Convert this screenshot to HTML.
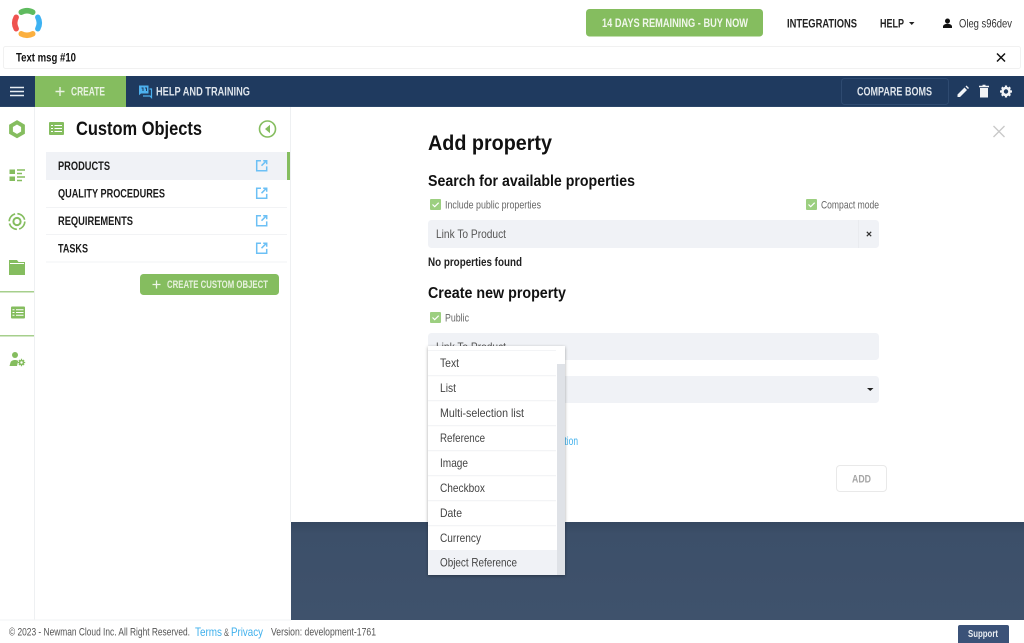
<!DOCTYPE html>
<html lang="en">
<head>
<meta charset="utf-8">
<title>Add property</title>
<style>
html,body{margin:0;padding:0;width:1024px;height:643px;overflow:hidden;background:#fff}
svg{display:block}
text{font-family:"Liberation Sans",sans-serif;font-size:12px;fill:#333}
.b{font-weight:700}
.h{font-weight:700;fill:#111}
.w{fill:#fff;font-weight:700}
.g{fill:#666}
.item{fill:#444;font-size:12px}
.link{fill:#3fb0ec}
.ic{fill:none;stroke:#85bd5f;stroke-width:2}
.ext{fill:none;stroke:#6cc0f5;stroke-width:1.5}
</style>
</head>
<body>
<svg width="1024" height="643" viewBox="0 0 1024 643" xmlns="http://www.w3.org/2000/svg">
<defs>
<linearGradient id="dk" x1="0" y1="0" x2="0" y2="1"><stop offset="0" stop-color="#354760"/><stop offset=".12" stop-color="#3c4f69"/><stop offset="1" stop-color="#3f526c"/></linearGradient>
<filter id="sh" x="-10%" y="-10%" width="120%" height="120%"><feDropShadow dx="0" dy="1" stdDeviation="1.500" flood-color="#000" flood-opacity=".35"/></filter>
</defs>
<rect width="1024" height="643" fill="#fff"/>

<!-- logo -->
<g fill="none" stroke-width="5.500" stroke-linecap="round">
<path d="M21.250 12.200A12.250 12.250 0 0 1 32.750 12.200" stroke="#5fbb5f"/>
<path d="M37.800 17.250A12.250 12.250 0 0 1 37.800 28.750" stroke="#3db2f2"/>
<path d="M32.750 33.800A12.250 12.250 0 0 1 21.250 33.800" stroke="#fbb040"/>
<path d="M16.200 28.750A12.250 12.250 0 0 1 16.200 17.250" stroke="#ef5350"/>
</g>

<!-- top bar -->
<rect x="586" y="9" width="177" height="27.500" rx="3.500" fill="#85bd5f"/>
<text x="602" y="27" class="w" textLength="146" lengthAdjust="spacingAndGlyphs" style="fill:#f1f7ec">14 DAYS REMAINING - BUY NOW</text>
<text x="787" y="27.500" class="b" textLength="70" lengthAdjust="spacingAndGlyphs" style="fill:#222">INTEGRATIONS</text>
<text x="880" y="27.500" class="b" textLength="24" lengthAdjust="spacingAndGlyphs" style="fill:#222">HELP</text>
<path d="M909 22h5.500l-2.750 3z" fill="#222"/>
<circle cx="947.500" cy="21" r="2.500" fill="#111"/>
<path d="M943 28v-1.500c0-2 3-2.800 4.500-2.800s4.500.8 4.500 2.800V28z" fill="#111"/>
<text x="959" y="27.500" textLength="53" lengthAdjust="spacingAndGlyphs" style="fill:#333">Oleg s96dev</text>

<rect x="3.500" y="46.500" width="1017" height="22" rx="2" fill="#fff" stroke="#f1f1f1"/>
<text x="16" y="61.500" class="b" textLength="60" lengthAdjust="spacingAndGlyphs" style="fill:#111">Text msg #10</text>
<path d="M997 53.500l8 8M1005 53.500l-8 8" stroke="#111" stroke-width="1.500" fill="none"/>

<!-- nav -->
<rect x="0" y="76" width="1024" height="31" fill="#1f3a5f"/>
<rect x="0" y="106" width="1024" height="1" fill="#2a4568"/>
<path d="M10 87.500h14M10 91.500h14M10 95.500h14" stroke="#e8edf3" stroke-width="1.600" fill="none"/>
<rect x="35" y="76" width="91" height="31" fill="#85bd5f"/>
<path d="M60 87v9M55.500 91.500h9" stroke="#e9f3e2" stroke-width="1.400" fill="none"/>
<text x="71" y="95.500" class="w" textLength="34" lengthAdjust="spacingAndGlyphs" style="fill:#e9f3e2">CREATE</text>
<path d="M139 85.500h9.500v8H141l-2 1.700z" fill="#4db1ef"/>
<path d="M149.500 89h2v8.500l-1.500-1.500h-7" fill="none" stroke="#4db1ef" stroke-width="1.200"/>
<path d="M141.500 88h1.500v3M145 88h1.500v3" fill="none" stroke="#1f3a5f" stroke-width="1"/>
<text x="156" y="95.500" class="b" textLength="94" lengthAdjust="spacingAndGlyphs" style="fill:#dfe5ec">HELP AND TRAINING</text>
<rect x="841.500" y="78.500" width="107" height="26" rx="3" fill="none" stroke="#2e4a70"/>
<text x="857" y="95.500" class="b" textLength="75" lengthAdjust="spacingAndGlyphs" style="fill:#dfe5ec">COMPARE BOMS</text>
<path d="M957.500 97v-2.500l7-7 2.500 2.500-7 7zM965.500 86.500l1-1 2.500 2.500-1 1z" fill="#f2f4f7"/>
<path d="M980 88h8v9.500h-8zM979 85.800h10v1.400h-10zM982.500 84.800h3v1h-3z" fill="#f2f4f7"/>
<circle cx="1006" cy="91.500" r="3.500" fill="none" stroke="#f2f4f7" stroke-width="2.600"/>
<path d="M1006 85.500v2M1006 95.500v2M1000 91.500h2M1010 91.500h2M1001.800 87.300l1.400 1.400M1008.800 94.300l1.400 1.400M1010.200 87.300l-1.400 1.400M1003.200 94.300l-1.400 1.400" stroke="#f2f4f7" stroke-width="2.200" fill="none"/>

<!-- left rail -->
<rect x="34" y="107" width="1" height="513" fill="#eef0f2"/>
<rect x="290" y="107" width="1" height="415" fill="#eef0f2"/>
<path d="M17 122.300l6 3.500v6.800l-6 3.500-6-3.500v-6.800z" fill="none" stroke="#85bd5f" stroke-width="3.800"/>
<path d="M9.500 169.500h5.500v4.500H9.500zM9.500 176.500h5.500v4.500H9.500z" fill="#85bd5f"/>
<path d="M17 170h8M17 173.500h5M17 177h8M17 180.500h5" stroke="#85bd5f" stroke-width="1.500" fill="none"/>
<circle cx="17" cy="221.500" r="7.800" class="ic" stroke-dasharray="10 2.300" style="stroke-width:1.600"/>
<circle cx="17" cy="221.500" r="3.600" class="ic" style="stroke-width:2"/>
<path d="M9 260h8l1.500 2H25v13H9z" fill="#85bd5f"/>
<rect x="10" y="263" width="14" height="1" fill="#fff"/>
<rect x="0" y="291" width="34" height="1.500" fill="#a6cf8c"/>
<rect x="11" y="306.500" width="14" height="12" rx="1" fill="#85bd5f"/>
<path d="M12.500 309.800h2M16 309.800h7.500M12.500 312.500h2M16 312.500h7.500M12.500 315.200h2M16 315.200h7.500" stroke="#fff" stroke-width="1"/>
<rect x="0" y="335" width="34" height="1.500" fill="#a6cf8c"/>
<circle cx="15" cy="355" r="3" fill="#85bd5f"/>
<path d="M9.500 366l1-3.500c.5-1.700 2.500-2.500 4.500-2.500 1.300 0 2.400.3 3.200.8l-1.200 5.200z" fill="#85bd5f"/>
<circle cx="21.500" cy="362.500" r="2" fill="none" stroke="#85bd5f" stroke-width="1.600"/>
<path d="M21.500 358.800v1.400M21.500 364.800v1.400M17.800 362.500h1.400M23.800 362.500h1.400M18.900 359.900l1 1M23.100 364.100l1 1M24.100 359.900l-1 1M19.900 364.100l-1 1" stroke="#85bd5f" stroke-width="1.200"/>

<!-- side panel -->
<rect x="49" y="122" width="15" height="13" rx="1" fill="#85bd5f"/>
<path d="M51 125.500h2M54.500 125.500H62M51 128.500h2M54.500 128.500H62M51 131.500h2M54.500 131.500H62" stroke="#fff" stroke-width="1.100"/>
<text x="76" y="135" class="h" style="font-size:19px" textLength="126" lengthAdjust="spacingAndGlyphs">Custom Objects</text>
<circle cx="267.500" cy="129" r="8" fill="none" stroke="#85bd5f" stroke-width="1.600"/>
<path d="M270 124.800v8.400l-5-4.200z" fill="#85bd5f"/>

<rect x="46" y="152" width="241" height="28" fill="#f0f2f6"/>
<rect x="287" y="152" width="3" height="28" fill="#85bd5f"/>
<rect x="46" y="207" width="241" height="1" fill="#f2f3f5"/>
<rect x="46" y="234" width="241" height="1" fill="#f2f3f5"/>
<rect x="46" y="261.500" width="241" height="1" fill="#f2f3f5"/>
<text x="58" y="170" class="b" textLength="52" lengthAdjust="spacingAndGlyphs" style="fill:#1a1a1a">PRODUCTS</text>
<text x="58" y="197.500" class="b" textLength="107" lengthAdjust="spacingAndGlyphs" style="fill:#1a1a1a">QUALITY PROCEDURES</text>
<text x="58" y="225" class="b" textLength="75" lengthAdjust="spacingAndGlyphs" style="fill:#1a1a1a">REQUIREMENTS</text>
<text x="58" y="252.500" class="b" textLength="30" lengthAdjust="spacingAndGlyphs" style="fill:#1a1a1a">TASKS</text>
<g class="ext">
<path d="M261 160.700h-4.300v10h10v-4.300M261.500 165.700l4.500-4.500M263.200 160.700h3.500v3.500"/>
<path d="M261 188.200h-4.300v10h10v-4.300M261.500 193.200l4.500-4.500M263.200 188.200h3.500v3.500"/>
<path d="M261 215.700h-4.300v10h10v-4.300M261.500 220.700l4.500-4.500M263.200 215.700h3.500v3.500"/>
<path d="M261 243.200h-4.300v10h10v-4.300M261.500 248.200l4.500-4.500M263.200 243.200h3.500v3.500"/>
</g>
<rect x="140" y="274" width="139" height="21" rx="3.500" fill="#85bd5f"/>
<path d="M156.500 280.500v8M152.500 284.500h8" stroke="#eef6e8" stroke-width="1.300"/>
<text x="167" y="288" textLength="101" lengthAdjust="spacingAndGlyphs" style="fill:#e6f1dd;font-size:11px;font-weight:700">CREATE CUSTOM OBJECT</text>

<!-- modal backdrop -->
<rect x="291" y="522" width="733" height="98" fill="url(#dk)"/>

<!-- modal -->
<path d="M993.500 126l11 11M1004.500 126l-11 11" stroke="#c9c9c9" stroke-width="1.400" fill="none"/>
<text x="428" y="150" class="h" style="font-size:21px" textLength="124" lengthAdjust="spacingAndGlyphs">Add property</text>
<text x="428" y="186" class="h" style="font-size:15.500px" textLength="207" lengthAdjust="spacingAndGlyphs">Search for available properties</text>

<rect x="430" y="199" width="11" height="11" rx="1" fill="#9ccf80"/>
<path d="M432.500 204.500l2.200 2.200 4-4" stroke="#fff" stroke-width="1.200" fill="none"/>
<rect x="806" y="199" width="11" height="11" rx="1" fill="#9ccf80"/>
<path d="M808.500 204.500l2.200 2.200 4-4" stroke="#fff" stroke-width="1.200" fill="none"/>
<rect x="430" y="312" width="11" height="11" rx="1" fill="#9ccf80"/>
<path d="M432.500 317.500l2.200 2.200 4-4" stroke="#fff" stroke-width="1.200" fill="none"/>
<text x="445" y="208.500" class="g" style="font-size:11px" textLength="96" lengthAdjust="spacingAndGlyphs">Include public properties</text>
<text x="821" y="208.500" class="g" style="font-size:11px" textLength="58" lengthAdjust="spacingAndGlyphs">Compact mode</text>

<rect x="428" y="220" width="451" height="28" rx="3.500" fill="#f0f2f6"/>
<rect x="858" y="220" width="1" height="28" fill="#e9ebef"/>
<text x="436" y="238" class="g" textLength="70" lengthAdjust="spacingAndGlyphs" style="fill:#555">Link To Product</text>
<path d="M866.800 231.800l4.400 4.400M871.200 231.800l-4.400 4.400" stroke="#333" stroke-width="1.200" fill="none"/>
<text x="428" y="266" class="b" textLength="94" lengthAdjust="spacingAndGlyphs" style="fill:#222">No properties found</text>
<text x="428" y="298" class="h" style="font-size:15.500px" textLength="138" lengthAdjust="spacingAndGlyphs">Create new property</text>
<text x="445" y="321.500" class="g" style="font-size:11px" textLength="24" lengthAdjust="spacingAndGlyphs">Public</text>

<rect x="428" y="333" width="451" height="27" rx="3.500" fill="#f0f2f6"/>
<text x="436" y="351" class="g" textLength="70" lengthAdjust="spacingAndGlyphs" style="fill:#555">Link To Product</text>
<rect x="428" y="376" width="451" height="27" rx="3.500" fill="#f0f2f6"/>
<path d="M867 388h6.500l-3.250 3z" fill="#222"/>

<text x="520" y="445" class="link" textLength="58" lengthAdjust="spacingAndGlyphs">Add description</text>

<rect x="836.500" y="465.500" width="50" height="26" rx="3.500" fill="#fff" stroke="#e9e9e9"/>
<text x="852" y="482.500" class="b" textLength="19" lengthAdjust="spacingAndGlyphs" style="fill:#a5a5a5;font-size:11px">ADD</text>

<!-- dropdown -->
<rect x="428" y="346" width="137" height="229" fill="#fff" filter="url(#sh)"/>
<rect x="428" y="550" width="129" height="25" fill="#f0f2f6"/>
<rect x="557" y="364" width="8" height="211" fill="#dfe2e7"/>
<g fill="#f3f4f6">
<rect x="428" y="350" width="128" height="1"/>
<rect x="428" y="375" width="128" height="1.300"/>
<rect x="428" y="400" width="128" height="1.300"/>
<rect x="428" y="425" width="128" height="1.300"/>
<rect x="428" y="450" width="128" height="1.300"/>
<rect x="428" y="475" width="128" height="1.300"/>
<rect x="428" y="500" width="128" height="1.300"/>
<rect x="428" y="525" width="128" height="1.300"/>
</g>
<text x="440" y="367" class="item" textLength="19" lengthAdjust="spacingAndGlyphs">Text</text>
<text x="440" y="392" class="item" textLength="16" lengthAdjust="spacingAndGlyphs">List</text>
<text x="440" y="417" class="item" textLength="84" lengthAdjust="spacingAndGlyphs">Multi-selection list</text>
<text x="440" y="442" class="item" textLength="45" lengthAdjust="spacingAndGlyphs">Reference</text>
<text x="440" y="467" class="item" textLength="28" lengthAdjust="spacingAndGlyphs">Image</text>
<text x="440" y="492" class="item" textLength="45" lengthAdjust="spacingAndGlyphs">Checkbox</text>
<text x="440" y="517" class="item" textLength="22" lengthAdjust="spacingAndGlyphs">Date</text>
<text x="440" y="542" class="item" textLength="41" lengthAdjust="spacingAndGlyphs">Currency</text>
<text x="440" y="566.500" class="item" textLength="77" lengthAdjust="spacingAndGlyphs">Object Reference</text>

<!-- footer -->
<rect x="0" y="620" width="1024" height="23" fill="#fff"/>
<rect x="0" y="619.500" width="291" height="1" fill="#f2f3f4"/>
<text x="9" y="635.500" class="g" style="font-size:11px;fill:#555" textLength="181" lengthAdjust="spacingAndGlyphs">© 2023 - Newman Cloud Inc. All Right Reserved.</text>
<text x="195" y="636" class="link" textLength="27" lengthAdjust="spacingAndGlyphs">Terms</text>
<text x="224" y="636" class="g" style="font-size:11px" textLength="5" lengthAdjust="spacingAndGlyphs">&amp;</text>
<text x="231" y="636" class="link" textLength="32" lengthAdjust="spacingAndGlyphs">Privacy</text>
<text x="271" y="635.500" class="g" style="font-size:11px;fill:#555" textLength="105" lengthAdjust="spacingAndGlyphs">Version: development-1761</text>
<path d="M958 627a2 2 0 0 1 2-2h47a2 2 0 0 1 2 2v16h-51z" fill="#3b5278"/>
<text x="968" y="637" class="w" style="font-size:10.500px;fill:#e8ecf1" textLength="30" lengthAdjust="spacingAndGlyphs">Support</text>
</svg>
</body>
</html>
